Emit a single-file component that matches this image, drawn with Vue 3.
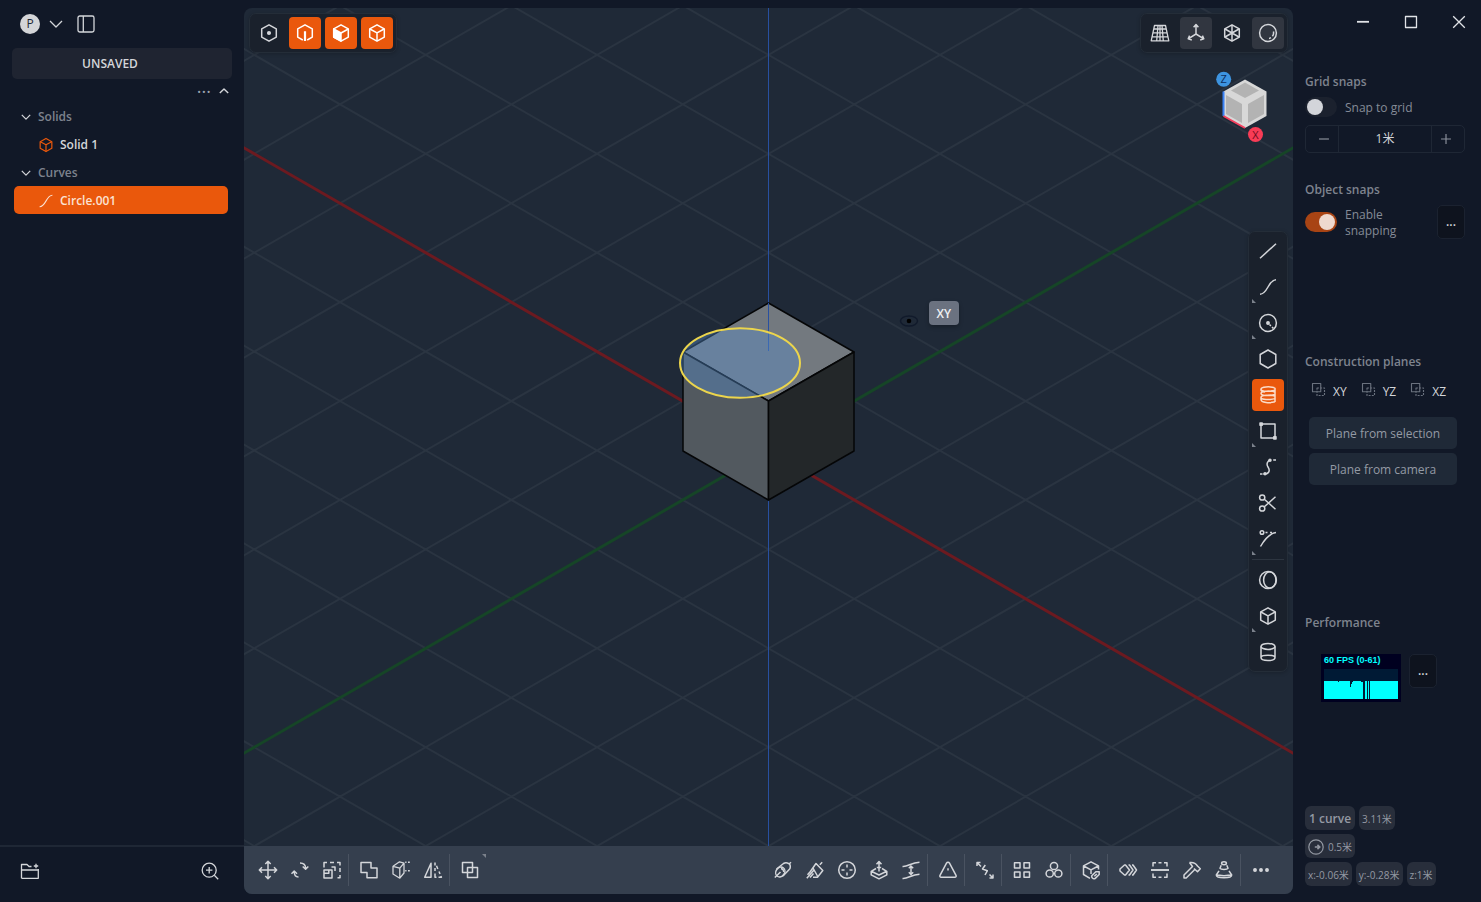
<script setup>
import { ref } from 'vue'

const hex = '<path d="M10 1.8 17.3 5.9V14.1L10 18.2 2.7 14.1V5.9Z"/>'

const icons = {
  point: hex + '<circle class="solid" cx="10" cy="10" r="1.3"/>',
  edge: '<path d="M7.8 17 2.7 14.1V5.9L10 1.8 17.3 5.9V14.1L12.2 17"/><path stroke-width="2.2" d="M10 8.2V18"/>',
  face: hex + '<path class="solid" d="M2.7 6 10 10V18L2.7 14Z"/><path d="M10 10 17.3 6"/>',
  solid: hex + '<path d="M2.9 6 10 9.8 17.1 6M10 9.8V18"/>',
  grid: '<path stroke-width="1.3" d="M4.5 2.5H15.5L18.8 17.8H1.2ZM3.8 6H16.2M3 9.8H17M2.1 13.8H17.9M8 2.5 6.7 17.8M12 2.5 13.3 17.8M10 2.5V17.8"/>',
  axes: '<path d="M10 2V11L2.6 15.6M10 11 17.4 15.6M7.6 4.2 10 1.6 12.4 4.2M3.6 12.6 2.2 15.9 5.8 17M16.4 12.6 17.8 15.9 14.2 17"/>',
  mesh: hex + '<path d="M10 2V18M3 6 17 14M17 6 3 14"/>',
  sphere: '<circle cx="10" cy="10" r="8.4"/><path d="M15.4 8.5A5.5 5.5 0 0 1 14.4 13.3M13 14.7A6 6 0 0 1 11 15.4"/>',
  line: '<path d="M2 17.3 18 2.7"/>',
  curve: '<path d="M2 17.2C10 17.2 10 2.8 18 2.8"/>',
  circle: '<circle cx="10" cy="10" r="8.4"/><circle class="solid" cx="10" cy="10" r="1.2"/><path stroke-dasharray="2 1.5" d="M11.5 11.5 15.5 15.5"/>',
  polygon: '<path d="M10 1 17.8 5.5V14.5L10 19 2.2 14.5V5.5Z"/>',
  spiral: '<path d="M16.5 2.8C12 1.2 3 1.7 3 4.2S12 6.8 17 5.2M17 2.8V17M16.8 7C12 5.4 3 5.9 3 8.4S12 11 17 9.4M16.8 11C12 9.6 3 10 3 12.4S12 15 17 13.6M3 12.5V14.5C3 17.8 12 18.3 17 16.8M3 4.2V5C3 6.4 5 6.8 7 7"/>',
  rect: '<path d="M3.5 3H17V17H3V3Z"/><path class="solid" d="M2 2H4.2V4.2H2ZM15.8 15.8H18V18H15.8Z"/>',
  bridge: '<path d="M5.5 17C12 17 12 13 10 10S9.5 3.2 13 3M2 17H4.5M15.2 3H18"/><circle class="solid" cx="7" cy="16.8" r="1"/><circle class="solid" cx="12" cy="3.3" r="1"/>',
  cut: '<circle cx="4.2" cy="4.5" r="2.6"/><circle cx="4.2" cy="15.5" r="2.6"/><path d="M6.3 6.2 17.5 16.2M6.3 13.8 17.5 3.8"/>',
  tangent: '<circle cx="4" cy="3.5" r="1.8"/><path d="M7.5 3.5H9.5M12 3.5H14M2.5 17.5C6.5 10.5 11 4.5 18 3.6"/>',
  torus: '<circle cx="10" cy="10" r="8.4"/><ellipse cx="11.8" cy="10" rx="6.2" ry="8.2"/>',
  cube: hex + '<path d="M2.9 6 10 9.8 17.1 6M10 9.8V18"/>',
  cylinder: '<ellipse cx="10" cy="4.4" rx="7" ry="3"/><path d="M3 4.4V15.6C3 19.6 17 19.6 17 15.6V4.4M3 15.2C4 12.6 16 12.6 17 15.2"/>',
  move: '<path d="M10 1.5V18.5M1.5 10H18.5M7.3 4 10 1.3 12.7 4M7.3 16 10 18.7 12.7 16M4 7.3 1.3 10 4 12.7M16 7.3 18.7 10 16 12.7"/>',
  rotate: '<path d="M10 3C14.5 3 15.6 5 15.6 8.3M12.7 6.5 15.6 9.3 18.3 6.5M8.5 17C5 17 4.2 15 4.2 11.5M1.5 13.7 4.2 11 7 13.7"/>',
  scale: '<path d="M2 10H10V18H2ZM6.8 10V13.2H2M2 7.5V2.5H5M8 2.5H12M15 2.5H18V5.5M18 8V12M18 15V17.8H15.5M9.5 7H13V11"/>',
  union: '<path d="M2 2.5H12V8H18V17.8H8V12.5H2Z"/>',
  slice: '<path stroke-width="1.3" d="M8.8 8.2V18.2L2 14V6.3L8.8 8.2 13 3.2 8.5 1.8 2 6.3M13 3.2V13L8.8 18.2"/><path d="M14.2 2.2H15.5M17 2.2H18.8M14.2 10.8H15.5M17 10.8H18.8"/>',
  mirror: '<path d="M8 3.2V17.2H1.7Z"/><path d="M12 2.5V5.5M12 8V11M12 13.5V17.2H13.5M13.5 5.8 14.8 9M16 11.5 17 14M15.5 17.2H18.4L17.8 16"/>',
  copy: '<path d="M2.5 2.5H12.5V12.5H2.5ZM7.5 7.5H17.5V17.5H7.5Z"/>',
  pipe: '<ellipse cx="7.3" cy="12" rx="4.3" ry="5.2" transform="rotate(35 7.3 12)"/><path d="M3.500 9 10.500 3.500C13 2 16 3.200 16.800 4.500S17.500 8.500 16.200 9.500L10 16M1.800 17.500 7.500 12M16.400 3.800 18 2.300M8 8.500A3.500 3.500 0 0 1 10.800 12"/>',
  fillet: '<path d="M5 12 11 3.500 17.800 10.500 12.500 17.300H8M8 8 13 17M1.800 18.200 9 10M14.800 4.800 17.200 2.300M2.500 14.800 5 12M5 17.500 8.500 13.500"/>',
  target: '<circle cx="10" cy="10" r="8.3"/><path d="M10 4.5V7.5M10 12.5V15.5M4.5 10H7.5M12.5 10H15.5"/>',
  extrude: '<path d="M7 8.500 2.200 11.300 10 15 17.800 11.300 13 8.500M2.200 11.300V14.800L10 18.800 17.800 14.800V11.300M10 11.500V2M7.500 4.200 10 1.500 12.500 4.200M7.800 7.500H12.200"/>',
  offset: '<path d="M1.5 6.5C7 7 10 2.500 18.5 2.200M1.500 18.500C7 19 10 14.500 18.500 14.200M10 6.500V14M7.800 8.200 10 6 12.200 8.200M7.800 12.300 10 14.500 12.200 12.300"/>',
  warning: '<path d="M8.5 3.2C9.2 2 10.8 2 11.5 3.2L18 15.3C18.5 16.4 18 17.3 16.8 17.3H3.2C2 17.3 1.5 16.4 2 15.3ZM10 8.3V10.5"/>',
  deform: '<path d="M2 6V2.5H5.5M2 2.5 6 6.500M18 14.500V18H14.500M18 18 14.500 14.500M10.300 5 7.500 9 12.300 10.800 10 15"/>',
  array: '<path d="M2.5 2.8H8V8H2.5ZM12 2.8H17.5V8H12ZM2.5 12H8V17.3H2.5ZM12 12H17.5V17.3H12Z"/>',
  radial: '<circle cx="10" cy="6" r="3.6"/><circle cx="5.7" cy="13.5" r="3.6"/><circle cx="14.3" cy="13.5" r="3.6"/>',
  tagged: '<path d="M9 18.3 2.5 14.5V5.8L10 1.8 17.5 5.8V9.5M2.7 6 10 9.8 17.3 6M10 9.8V14"/><path d="M11 15.500 14.800 11.700H18.200V14.500L14 18.600C12 19.500 10 17.200 11 15.500ZM13.300 16.300 15.800 14"/>',
  steps: '<path d="M6.5 5H7.5L11.5 10 7.5 15H6.5L2 11V9ZM10.5 5H11.5L15 10 11.5 15H10.5M14 5H15L18.5 10 15 15H14"/>',
  section: '<path stroke-width="1.9" d="M1 10H19"/><path d="M3 6.5V2.8H6M8.5 2.8H11.5M14 2.8H17V6.5M3 13.5V17.2H6M8.5 17.2H11.5M14 17.2H17V13.5"/>',
  hammer: '<path d="M7.5 2.5C11 2 14 3.5 15.5 6L18.3 8.7 15.5 11.8 12 8.5M7.5 2.5 10.5 6.5 2 15V18H4.2L12.8 9.5"/>',
  cone: '<ellipse cx="10" cy="3.2" rx="2.4" ry="1.5"/><path d="M7.2 5.2 6 8.3C7 9.8 13 9.800 14 8.300L12.800 5.200M5 10.800 2.300 15C2.300 18.800 17.700 18.800 17.700 15L15 10.800M2.500 14.500C6 16 14 16 17.500 14.500"/>',
  more: '<g class="solid"><circle cx="4" cy="10" r="1.2"/><circle cx="10" cy="10" r="1.2"/><circle cx="16" cy="10" r="1.2"/></g>',
  layout: '<rect x="2" y="2" width="16" height="16" rx="1.8"/><path d="M7.3 2V18"/>',
  chevronDown: '<path d="M4 7 10 13 16 7"/>',
  chevronUp: '<path d="M4 13 10 7 16 13"/>',
  folder: '<path d="M1.5 17.3V3.5H7L9 5.5H11.5M1.5 9H18.3V17.3H1.5M16 2.8V7.2M13.8 5H18.2M18.3 9V8"/>',
  zoom: '<circle cx="9.2" cy="9.2" r="7"/><path d="M14.3 14.3 18.2 18.2M9.2 6V12.4M6 9.2H12.4"/>',
  minimize: '<path d="M4 9.8H16" stroke-width="1.8"/>',
  maximize: '<path d="M4.500 4.500H15.500V15.500H4.500Z" stroke-width="1.3"/>',
  close: '<path d="M4.200 4.200 15.800 15.800M15.800 4.200 4.200 15.800" stroke-width="1.3"/>',
  minus: '<path d="M4.5 10H15.5"/>',
  plus: '<path d="M4.5 10H15.5M10 4.5V15.5"/>',
  plane: '<path d="M2 2H13V13H2Z"/><path stroke-dasharray="2.6 1.6" d="M8 8H18V18H8Z"/>',
  radius: '<circle cx="10" cy="10" r="9"/><path stroke-width="2" d="M8.5 10H15M11.8 7.300 14.800 10 11.800 12.700"/>',
}

const selectModes = [
  { icon: 'point', label: 'Points' },
  { icon: 'edge', label: 'Edges', active: true },
  { icon: 'face', label: 'Faces', active: true },
  { icon: 'solid', label: 'Solids', active: true },
]
const viewModes = [
  { icon: 'grid', label: 'Grid' },
  { icon: 'axes', label: 'Axes', active: true },
  { icon: 'mesh', label: 'Wireframe' },
  { icon: 'sphere', label: 'Shading', active: true },
]
const createTools = [
  [
    { icon: 'line', label: 'Line' },
    { icon: 'curve', label: 'Curve', more: true },
    { icon: 'circle', label: 'Circle', more: true },
    { icon: 'polygon', label: 'Polygon' },
    { icon: 'spiral', label: 'Spiral', active: true },
    { icon: 'rect', label: 'Rectangle', more: true },
    { icon: 'bridge', label: 'Bridge' },
    { icon: 'cut', label: 'Trim' },
    { icon: 'tangent', label: 'Tangent', more: true },
  ],
  [
    { icon: 'torus', label: 'Sphere' },
    { icon: 'cube', label: 'Box', more: true },
    { icon: 'cylinder', label: 'Cylinder' },
  ],
]
const editLeft = [['move', 'rotate', 'scale'], ['union', 'slice', 'mirror'], ['copy']]
const editRight = [
  ['pipe', 'fillet', 'target', 'extrude', 'offset'],
  ['warning'],
  ['deform'],
  ['array', 'radial'],
  ['tagged'],
  ['steps', 'section', 'hammer', 'cone'],
  ['more'],
]

const snapToGrid = ref(false)
const snapping = ref(true)
const gridSize = ref('1米')

/* Isometric grid: origin in the middle of the scene, 99 units between lines */
const gridLines = []
for (let n = -22; n <= 22; n++) {
  if (n === 0) continue
  const y = 442.5 + n * 98.9
  gridLines.push(`M-475.5 ${y - 577}L1524.5 ${y + 577}M-475.5 ${y + 577}L1524.5 ${y - 577}`)
}
const gridPath = gridLines.join('')
</script>

<template>
  <div class="app">
    <aside class="sidebar">
      <header class="brand">
        <button class="avatar" aria-label="Account">P</button>
        <button class="plain" aria-label="Menu"><svg class="ico" viewBox="0 0 20 20" v-html="icons.chevronDown" /></button>
        <button class="plain" aria-label="Toggle sidebar"><svg class="ico" viewBox="0 0 20 20" v-html="icons.layout" /></button>
      </header>
      <button class="doc">UNSAVED</button>
      <div class="outline-tools">
        <button class="plain dots" aria-label="Outline options">···</button>
        <button class="plain" aria-label="Collapse all"><svg class="ico small" viewBox="0 0 20 20" v-html="icons.chevronUp" /></button>
      </div>
      <nav class="outline">
        <button class="group"><svg class="ico small" viewBox="0 0 20 20" v-html="icons.chevronDown" />Solids</button>
        <button class="item"><svg class="ico node orange" viewBox="0 0 20 20" v-html="icons.cube" />Solid 1</button>
        <button class="group"><svg class="ico small" viewBox="0 0 20 20" v-html="icons.chevronDown" />Curves</button>
        <button class="item selected"><svg class="ico node" viewBox="0 0 20 20" v-html="icons.curve" />Circle.001</button>
      </nav>
      <footer class="side-foot">
        <button class="plain" aria-label="New folder"><svg class="ico" viewBox="0 0 20 20" v-html="icons.folder" /></button>
        <button class="plain" aria-label="Zoom"><svg class="ico" viewBox="0 0 20 20" v-html="icons.zoom" /></button>
      </footer>
    </aside>

    <main class="stage">
      <svg class="scene" viewBox="0 0 1049 886" preserveAspectRatio="xMidYMid slice">
        <path class="gridline" :d="gridPath" />
        <path class="axis-x" d="M-475.5 -134.5 1524.5 1019.5" />
        <path class="axis-y" d="M-475.5 1019.5 1524.5 -134.5" />
        <path class="axis-z" d="M524.5 -200V1100" />
        <g class="solid-body">
          <path class="top" d="M524.5 295 610 344 524.5 393 439 344Z" />
          <path class="left" d="M439 344 524.5 393V492L439 443Z" />
          <path class="right" d="M610 344 524.5 393V492L610 443Z" />
        </g>
        <path class="axis-z" d="M524.5 295V343" />
        <ellipse class="profile" cx="496" cy="355" rx="60" ry="34.8" />
        <ellipse class="eye" cx="665" cy="313" rx="8.5" ry="5" />
        <circle cx="665" cy="313" r="2.3" />
      </svg>

      <span class="plane-tag">XY</span>

      <div class="top-tools">
        <div class="panel">
          <button v-for="m in selectModes" :key="m.icon" class="tool" :class="{ hot: m.active }" :aria-label="m.label">
            <svg class="ico" viewBox="0 0 20 20" v-html="icons[m.icon]" />
          </button>
        </div>
        <div class="panel">
          <button v-for="m in viewModes" :key="m.icon" class="tool" :class="{ on: m.active }" :aria-label="m.label">
            <svg class="ico" viewBox="0 0 20 20" v-html="icons[m.icon]" />
          </button>
        </div>
      </div>

      <svg class="navcube" viewBox="0 0 56 76">
        <path class="cube-frame" d="M31 9.500 52.500 21.500V46L31 58 9.500 46V21.500Z" />
        <path class="cube-face" d="M31 12.500 45 20.500 31 28 17 20.500Z" />
        <path class="cube-face" d="M12 25 28 34V53L12 44Z" />
        <path class="cube-face" d="M50 25 34 34V53L50 44Z" />
        <path class="cube-z" d="M9.500 21.500V46" />
        <path class="cube-x" d="M9.500 46 31 58" />
        <circle class="knob-z" cx="9.700" cy="9.300" r="7.500" />
        <text class="letter-z" x="9.700" y="13.300">Z</text>
        <circle class="knob-x" cx="41.500" cy="64.500" r="7.500" />
        <text class="letter-x" x="41.500" y="68.500">X</text>
      </svg>

      <div class="side-tools">
        <div class="panel vertical">
          <template v-for="(group, i) in createTools" :key="i">
            <hr v-if="i" class="rule" />
            <button v-for="t in group" :key="t.icon" class="tool" :class="{ hot: t.active, more: t.more }" :aria-label="t.label">
              <svg class="ico" viewBox="0 0 20 20" v-html="icons[t.icon]" />
            </button>
          </template>
        </div>
      </div>

      <div class="dock">
        <div class="dock-side">
          <div v-for="(group, i) in editLeft" :key="i" class="dock-group">
            <button v-for="t in group" :key="t" class="tool" :class="{ corner: t === 'copy' }" :aria-label="t">
              <svg class="ico" viewBox="0 0 20 20" v-html="icons[t]" />
            </button>
          </div>
        </div>
        <div class="dock-side">
          <div v-for="(group, i) in editRight" :key="i" class="dock-group">
            <button v-for="t in group" :key="t" class="tool" :aria-label="t">
              <svg class="ico" viewBox="0 0 20 20" v-html="icons[t]" />
            </button>
          </div>
        </div>
      </div>
    </main>

    <aside class="inspector">
      <div class="window-controls">
        <button v-for="c in ['minimize', 'maximize', 'close']" :key="c" class="plain" :aria-label="c">
          <svg class="ico" viewBox="0 0 20 20" v-html="icons[c]" />
        </button>
      </div>

      <section class="grid-snaps">
        <h2>Grid snaps</h2>
        <label class="switch"><input v-model="snapToGrid" type="checkbox" /><span>Snap to grid</span></label>
        <div class="stepper">
          <button aria-label="Decrease"><svg class="ico" viewBox="0 0 20 20" v-html="icons.minus" /></button>
          <input v-model="gridSize" type="text" aria-label="Grid size" />
          <button aria-label="Increase"><svg class="ico" viewBox="0 0 20 20" v-html="icons.plus" /></button>
        </div>
      </section>

      <section class="object-snaps">
        <h2>Object snaps</h2>
        <div class="snap-row">
          <label class="switch"><input v-model="snapping" type="checkbox" /><span>Enable snapping</span></label>
          <button class="ellipsis" aria-label="Snap options">...</button>
        </div>
      </section>

      <section class="planes">
        <h2>Construction planes</h2>
        <div class="plane-row">
          <button v-for="p in ['XY', 'YZ', 'XZ']" :key="p" class="plain plane">
            <svg class="ico" viewBox="0 0 20 20" v-html="icons.plane" /><span>{{ p }}</span>
          </button>
        </div>
        <div class="plane-actions">
          <button>Plane from selection</button>
          <button>Plane from camera</button>
        </div>
      </section>

      <section class="performance">
        <h2>Performance</h2>
        <div class="perf-row">
          <svg class="fps" viewBox="0 0 80 48">
            <rect width="80" height="48" fill="#000020" />
            <text x="3" y="9">60 FPS (0-61)</text>
            <rect x="3" y="15" width="74" height="30" fill="#001a35" />
            <path fill="#00ffff" d="M3 27H17V28H18V27H29V33H30V30H31V28H32V27H40V28H42V45H3ZM44 27H46V45H44ZM47 27H48V45H47ZM49 27H77V45H49Z" />
          </svg>
          <button class="ellipsis" aria-label="Performance options">...</button>
        </div>
      </section>

      <div class="stats">
        <div class="stat-row"><span class="chip strong">1 curve</span><span class="chip">3.11米</span></div>
        <div class="stat-row"><span class="chip"><svg class="ico" viewBox="0 0 20 20" v-html="icons.radius" />0.5米</span></div>
        <div class="stat-row"><span class="chip">x:-0.06米</span><span class="chip">y:-0.28米</span><span class="chip">z:1米</span></div>
      </div>
    </aside>
  </div>
</template>

<style>
body { background: #111827; }
</style>

<style scoped>
.app {
  display: grid;
  grid-template-columns: 244px minmax(0, 1fr) 188px;
  height: 100vh;
  overflow: hidden;
  background: #111827;
  color: #d4d6da;
  font: 12px/16px "Open Sans", "Noto Sans CJK SC", sans-serif;
}
* { box-sizing: border-box; }
button, input { font: inherit; color: inherit; margin: 0; }
button { border: 0; padding: 0; background: none; }
.ico {
  display: block;
  flex: none;
  width: 20px;
  height: 20px;
  fill: none;
  stroke: currentColor;
  stroke-width: 1.5;
  stroke-linejoin: round;
}
.ico :deep(.solid) { fill: currentColor; }
.ico.small { width: 14px; height: 14px; stroke-width: 2; }
.plain { display: flex; align-items: center; justify-content: center; }

/* Sidebar */
.sidebar { display: flex; flex-direction: column; min-height: 0; }
.brand { display: flex; align-items: center; height: 48px; padding-left: 20px; }
.avatar { width: 20px; height: 20px; margin-right: 6px; border-radius: 50%; background: #d4d5d8; color: #1f2937; line-height: 20px; text-align: center; }
.brand .plain { width: 20px; margin-right: 10px; }
.brand .plain .ico { stroke-width: 1.3; }
.doc { height: 31px; margin: 0 12px; padding-right: 24px; border-radius: 5px; background: #1f2431; font-weight: 600; }
.outline-tools { display: flex; justify-content: flex-end; align-items: center; gap: 6px; height: 23px; padding-right: 13px; }
.dots { font-size: 18px; color: #9ca3af; }
.outline { display: flex; flex-direction: column; padding: 0 16px 0 14px; }
.group, .item { display: flex; align-items: center; height: 28px; padding-top: 1px; border-radius: 5px; font-weight: 600; text-align: left; }
.group { gap: 5px; padding-left: 5px; color: #7d828d; }
.group .ico { color: #d4d6da; stroke-width: 1.8; }
.item { gap: 6px; padding-left: 24px; }
.item.selected { background: #ea580c; color: #fbe2d3; }
.node { width: 16px; height: 16px; }
.orange { color: #ea580c; }
.side-foot { display: flex; justify-content: space-between; align-items: flex-start; height: 57px; margin-top: auto; padding: 14px 24px 0 20px; border-top: 2px solid #1f2735; }
.side-foot .ico { stroke-width: 1.3; }

/* Stage */
.stage { position: relative; display: flex; flex-direction: column; min-width: 0; margin: 8px 0; border-radius: 8px; overflow: hidden; background: #1f2937; }
.scene { position: absolute; inset: 0; width: 100%; height: 100%; }
.gridline { fill: none; stroke: #2a3441; stroke-width: 2; }
.axis-x { stroke: #6c1a20; stroke-width: 3; }
.axis-y { stroke: #164527; stroke-width: 3; }
.axis-z { stroke: #2850a0; stroke-width: 1; }
.solid-body { stroke: #050607; stroke-width: 1.5; stroke-linejoin: round; }
.top { fill: #73797f; }
.left { fill: #52595f; }
.right { fill: #232729; }
.profile { fill: #588ecc; fill-opacity: 0.4; stroke: #ecd54c; stroke-width: 2; }
.eye { fill: none; stroke: #111a2b; stroke-width: 1.5; }
.plane-tag { position: absolute; left: calc(50% + 160px); top: calc(50% - 150px); padding: 5px 8px 3px; border-radius: 4px; background: #6b7280; color: #eef0f3; box-shadow: 0 2px 4px #0004; font-weight: 600; }
.top-tools { position: relative; display: flex; justify-content: space-between; padding: 5px; }
.panel { display: flex; gap: 4px; padding: 3px; border: 1px solid #242d38; border-radius: 7px; background: #1a212c; box-shadow: 0 1px 4px #0003; }
.vertical { flex-direction: column; }
.tool { position: relative; display: grid; place-items: center; width: 32px; height: 32px; border-radius: 4px; }
.tool.hot { background: #ea580c; color: #fff; }
.vertical .tool.hot { color: #fbdcc8; }
.tool.on { background: #313640; }
.tool.more::after, .tool.corner::after { content: ""; position: absolute; left: 0; bottom: 0; border: 2px solid transparent; border-left-color: #7b818b; border-bottom-color: #7b818b; }
.tool.corner::after { left: auto; bottom: auto; top: 0; right: 0; border-color: #7b818b #7b818b transparent transparent; }
.rule { width: 32px; height: 1px; margin: 0; border: 0; background: #2d3540; }
.navcube { position: absolute; top: 62px; right: 23px; width: 56px; height: 76px; }
.cube-frame { fill: #d8d8d8; }
.cube-face { fill: #b3b3b3; }
.cube-z { stroke: #3b82f6; stroke-width: 2; }
.cube-x { stroke: #f43f5e; stroke-width: 2; }
.knob-z { fill: #3d94e0; }
.knob-x { fill: #f83c56; }
.letter-z, .letter-x { font-size: 11px; text-anchor: middle; fill: #0c2f60; }
.letter-x { fill: #6d0b20; }
.side-tools { position: absolute; inset: 0 5px 0 auto; display: flex; align-items: center; pointer-events: none; }
.side-tools .panel { pointer-events: auto; }
.dock { position: relative; display: flex; justify-content: space-between; height: 48px; margin-top: auto; padding: 8px 16px 8px 8px; background: #353f4e; }
.dock-side, .dock-group { display: flex; }
.dock-group + .dock-group { padding-left: 4px; border-left: 1px solid #4a5361; }

/* Inspector */
.inspector { display: flex; flex-direction: column; min-height: 0; padding: 0 16px 16px 12px; color: #8b909b; }
.window-controls { display: flex; justify-content: flex-end; gap: 28px; height: 44px; margin-right: -4px; color: #e1e3e7; }
h2 { margin: 0; font: inherit; font-weight: 600; color: #7e838e; }
.grid-snaps { padding-top: 30px; }
.switch { display: flex; align-items: center; gap: 8px; color: #858b97; }
.switch span { padding-top: 2px; }
.grid-snaps .switch { height: 20px; margin-top: 7px; }
.switch input { appearance: none; flex: none; display: flex; align-items: center; width: 32px; height: 20px; padding: 0 2px; border-radius: 10px; background: #1b212e; }
.switch input::before { content: ""; width: 16px; height: 16px; border-radius: 50%; background: #d3d5da; }
.switch input:checked { justify-content: flex-end; background: #a84414; }
.switch input:checked::before { background: #eed9cf; }
.stepper { display: flex; height: 28px; margin-top: 8px; border: 1px solid #1f2735; border-radius: 5px; }
.stepper button { display: grid; place-items: center; width: 32px; padding-left: 4px; }
.stepper button:last-child { padding: 0 4px 0 0; }
.stepper .ico { width: 18px; height: 18px; stroke-width: 1.3; }
.stepper input { flex: 1; min-width: 0; padding: 0; border: solid #1f2735; border-width: 0 1px; outline: 0; background: none; color: #cfd2d8; text-align: center; }
.object-snaps { padding-top: 29px; }
.snap-row { display: flex; justify-content: space-between; align-items: center; height: 34px; margin-top: 7px; }
.snap-row .switch { width: 104px; }
.ellipsis { width: 28px; height: 34px; border: 1px solid #1b2230; border-radius: 5px; background: #0e131e; color: #d4d6da; font-weight: 600; }
.planes { padding-top: 115px; }
.plane-row { display: flex; gap: 14px; margin-top: 12px; padding-left: 6px; }
.plane { gap: 7px; color: #d4d6da; height: 20px; }
.plane .ico { width: 15px; height: 15px; margin-bottom: 5px; color: #6a717e; }
.plane-actions { display: flex; flex-direction: column; gap: 4px; margin-top: 15px; padding: 0 8px 0 4px; }
.plane-actions button { height: 32px; padding-top: 1px; border-radius: 5px; background: #1f2937; color: #949aa5; }
.performance { padding-top: 130px; }
.perf-row { display: flex; align-items: flex-start; gap: 8px; margin-top: 23px; padding-left: 16px; }
.fps { width: 80px; height: 48px; }
.fps text { fill: #00ffff; font: bold 9px "Liberation Sans", sans-serif; }
.stats { display: flex; flex-direction: column; gap: 4px; margin-top: auto; }
.stat-row { display: flex; gap: 4px; }
.chip { display: flex; align-items: center; gap: 4px; height: 24px; padding: 1px 3px 0; border-radius: 6px; background: #282e3b; color: #9499a3; font-size: 10px; white-space: nowrap; }
.chip .ico { width: 16px; height: 16px; }
.strong { padding: 1px 4px 0; font-size: 12px; font-weight: 600; }
</style>
